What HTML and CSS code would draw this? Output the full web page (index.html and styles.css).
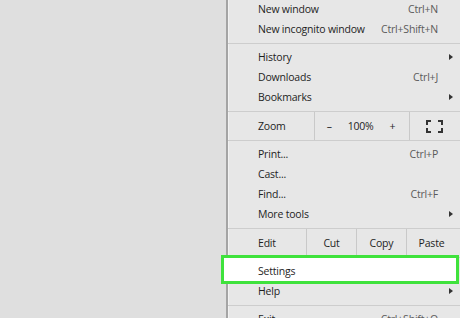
FILE: index.html
```html
<!DOCTYPE html>
<html lang="en">
<head>
    <meta charset="UTF-8">
    <meta name="viewport" content="width=device-width, initial-scale=1.0">
    <title>Chrome menu - Settings</title>
    <link rel="stylesheet" href="styles.css">
</head>
<body>
    <div class="page">
        <div class="blank"></div>

        <div class="menu">
            <!-- windows -->
            <div class="group first">
                <div class="item"><span class="label">New window</span><span class="key">Ctrl+N</span><span class="tail"></span></div>
                <div class="item"><span class="label">New incognito window</span><span class="key">Ctrl+Shift+N</span><span class="tail"></span></div>
            </div>

            <div class="group">
                <div class="item"><span class="label">History</span><span class="tail"><i class="arrow"></i></span></div>
                <div class="item"><span class="label">Downloads</span><span class="key">Ctrl+J</span><span class="tail"></span></div>
                <div class="item"><span class="label">Bookmarks</span><span class="tail"><i class="arrow"></i></span></div>
            </div>

            <!-- zoom -->
            <div class="row zoom">
                <span class="cell name">Zoom</span>
                <span class="cell controls">
                    <span class="minus">&ndash;</span>
                    <span class="pct">100%</span>
                    <span class="plus">+</span>
                </span>
                <span class="cell full">
                    <svg width="17" height="13" viewBox="0 0 17 13">
                        <path d="M1 5V1h4M12 1h4v4M16 8v4h-4M5 12H1V8" fill="none" stroke="#333" stroke-width="2"/>
                    </svg>
                </span>
            </div>

            <div class="group">
                <div class="item"><span class="label">Print...</span><span class="key">Ctrl+P</span><span class="tail"></span></div>
                <div class="item"><span class="label">Cast...</span><span class="tail"></span></div>
                <div class="item"><span class="label">Find...</span><span class="key">Ctrl+F</span><span class="tail"></span></div>
                <div class="item"><span class="label">More tools</span><span class="tail"><i class="arrow"></i></span></div>
            </div>

            <!-- edit -->
            <div class="row edit">
                <span class="cell name">Edit</span>
                <span class="cell btn">Cut</span>
                <span class="cell btn">Copy</span>
                <span class="cell btn">Paste</span>
            </div>

            <div class="group">
                <div class="item picked"><span class="label">Settings</span><span class="tail"></span></div>
                <div class="item"><span class="label">Help</span><span class="tail"><i class="arrow"></i></span></div>
            </div>

            <div class="group">
                <div class="item"><span class="label">Exit</span><span class="key">Ctrl+Shift+Q</span><span class="tail"></span></div>
            </div>
        </div>
    </div>
</body>
</html>
```

FILE: styles.css
```css
body {
    margin: 0;
    padding: 0;
    height: 318px;
    overflow: hidden;
    background-color: #dfdfdf;
    font-family: 'Open Sans', 'Noto Sans', sans-serif;
    font-size: 10.5px;
    letter-spacing: -0.2px;
    color: #1e1e1e;
}

.page {
    display: flex;
    height: 318px;
}

.blank {
    width: 226px;
    flex: none;
}

.menu {
    width: 232px;
    flex: none;
    background-color: #e7e7e7;
    border-left: 2px solid #a4a4a4;
    box-shadow: inset 1px 0 0 #f2f2f2;
}

/* groups split by a thin line */
.group {
    padding: 3px 0 4px;
    border-top: 1px solid #cdcdcd;
}

.group.first {
    border-top: none;
    padding-top: 0;
    margin-top: -1px;
}

.item {
    display: flex;
    align-items: center;
    height: 20px;
    padding-left: 30px;
    position: relative;
}

.label {
    flex: 1;
    position: relative;
}

.key {
    color: #5a5a5a;
    position: relative;
}

.tail {
    width: 22px;
    display: flex;
    align-items: center;
}

.arrow {
    display: block;
    margin-left: 11px;
    width: 0;
    height: 0;
    border-top: 3.5px solid transparent;
    border-bottom: 3.5px solid transparent;
    border-left: 4px solid #333;
}

/* green highlight round Settings */
.item.picked::before {
    content: '';
    position: absolute;
    left: -7px;
    right: 1px;
    top: -6px;
    bottom: -3px;
    background: #fff;
    border: 3px solid #3fe23c;
}

/* zoom and edit rows */
.row {
    display: flex;
    height: 28px;
    border-top: 1px solid #cdcdcd;
}

.cell {
    display: flex;
    align-items: center;
    border-left: 1px solid #c9c9c9;
}

.cell.name {
    border-left: none;
    padding-left: 30px;
}

.zoom .name {
    width: 56px;
}

.controls {
    width: 95px;
    justify-content: space-between;
}

.minus {
    margin-left: 12px;
}

.plus {
    margin-right: 14px;
}

.full {
    width: 48px;
    justify-content: center;
    padding-right: 2px;
}

.edit .name {
    width: 48px;
}

.btn {
    width: 49px;
    justify-content: center;
}
```
